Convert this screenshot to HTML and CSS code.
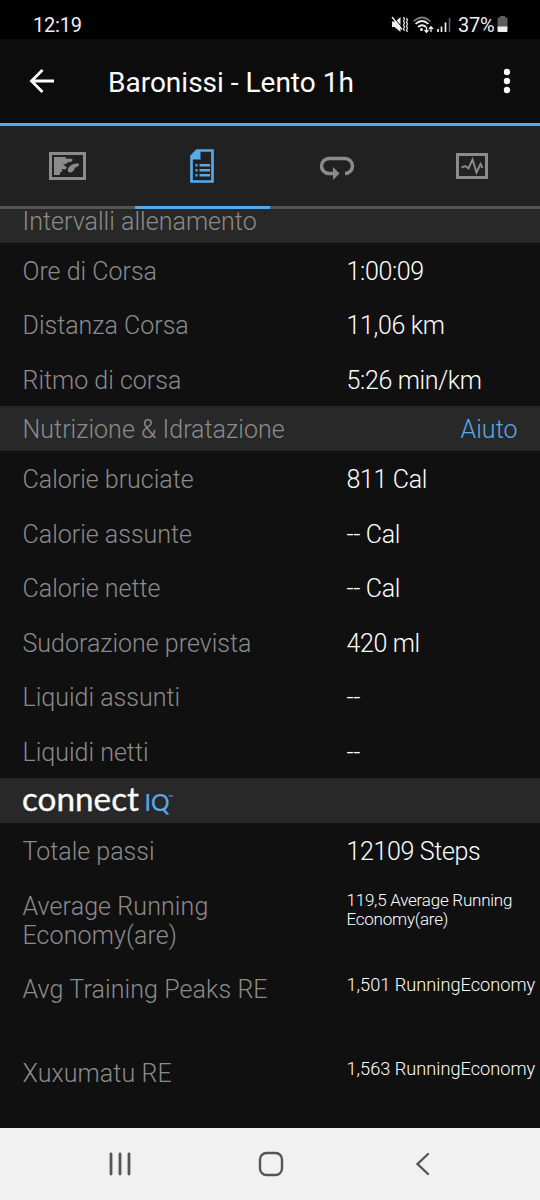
FILE: index.html
```html
<!DOCTYPE html>
<html lang="it">
<head>
<meta charset="utf-8">
<title>Baronissi - Lento 1h</title>
<link rel="stylesheet" href="styles.css">
</head>
<body>
<div class="status">
  <span class="clock">12:19</span>
  <svg class="status-icons" width="64" height="24" viewBox="0 0 64 24">
    <path d="M3 8.500h3.500l5-4.500v15l-6-5H3z" fill="#eee"/>
    <path d="M3.500 3l11 13" stroke="#000" stroke-width="1"/>
    <path d="M3 4l10 12.500" stroke="#eee" stroke-width="1.300"/>
    <path d="M14.500 4l1 2-1 2 1 2-1 2 1 2-1 2 1 2M17.500 5l1 2-1 2 1 2-1 2 1 2-1 2 1 2" fill="none" stroke="#ddd" stroke-width="1.300"/>
    <path d="M24.500 8.500q8.500-8 17 0" fill="none" stroke="#777" stroke-width="1.700"/>
    <path d="M26.500 11q6.500-6 13 0M29 14q4-3.500 8 0" fill="none" stroke="#eee" stroke-width="1.700"/>
    <circle cx="32.500" cy="16.500" r="1.500" fill="#eee"/>
    <path d="M37.500 14v5M35.500 17l2 2.300 2-2.300M42 19v-5M40 16l2-2.300 2 2.300" fill="none" stroke="#eee" stroke-width="1.300"/>
    <path d="M49 16v3M52.500 13.500V19M56.500 9.500V19" stroke="#eee" stroke-width="1.700"/>
    <path d="M60.500 5v14" stroke="#666" stroke-width="1.500"/>
  </svg>
  <span class="percent">37%</span>
  <svg class="battery" width="11" height="18" viewBox="0 0 11 18">
    <path d="M3 1h5v1.500h2.500V12H.5V2.500H3z" fill="#5c5c5c"/>
    <path d="M.5 11.500h10V16q0 1-1 1h-8q-1 0-1-1z" fill="#eee"/>
  </svg>
</div>
<header class="appbar">
  <svg class="back" width="26" height="26" viewBox="0 0 26 26"><path d="M25 13H3M13.500 2L2.500 13l11 11" fill="none" stroke="#fff" stroke-width="2.800"/></svg>
  <h1 class="title">Baronissi - Lento 1h</h1>
  <svg class="more" width="8" height="26" viewBox="0 0 8 26" fill="#fff"><circle cx="4" cy="4" r="3.200"/><circle cx="4" cy="13" r="3.200"/><circle cx="4" cy="22" r="3.200"/></svg>
</header>
<nav class="tabs">
  <div class="tab">
    <svg width="38" height="30" viewBox="0 0 38 30"><rect x="2.500" y="2.500" width="34" height="25" fill="none" stroke="#8b8b8b" stroke-width="3"/><path d="M6 6h12l-.5 2 3-.5 4 .5-.5 2.500-4.500 1-1.500 1.500-3 .5 2 1.500 2 1.500-1.500 2-4-.5 1 2-2.500 1.500v2.500H6zM31 12.500q.5 3-4 4-1.500 5-5 5-3-.5-2-4 3-5.500 11-5z" fill="#8b8b8b"/></svg>
  </div>
  <div class="tab tab-active">
    <svg width="26" height="36" viewBox="0 0 26 36"><path d="M8 2.500h15.500v31h-21V8z" fill="none" stroke="#58a9e7" stroke-width="2.700"/><path d="M8 2h3.500v9.500H2V8zM6.500 16h2v2.500h-2zM6.500 21h2v2.500h-2zM6.500 26h2v2.500h-2zM10.500 16h10.500v2.500H10.500zM10.500 21h10.500v2.500H10.500zM10.500 26h10.500v2.500H10.500z" fill="#58a9e7"/></svg>
  </div>
  <div class="tab">
    <svg class="laps" width="36" height="26" viewBox="0 0 36 26"><path d="M14 18.500h-4a7.500 7.500 0 0 1 0-15h16a7.500 7.500 0 0 1 0 15" fill="none" stroke="#8b8b8b" stroke-width="3.500"/><path d="M14 12v13l6.500-6.500z" fill="#8b8b8b"/></svg>
  </div>
  <div class="tab">
    <svg width="34" height="28" viewBox="0 0 34 28"><rect x="2.500" y="2.500" width="29" height="23" fill="none" stroke="#8b8b8b" stroke-width="3"/><path d="M6.500 15.500l4-1.500 3 2.500L17.500 7.500l4 13 4-8.500 2 4" fill="none" stroke="#8b8b8b" stroke-width="1.900"/></svg>
  </div>
</nav>
<main class="list">
  <div class="section section-cut"><span>Intervalli allenamento</span></div>
  <div class="row"><span class="label">Ore di Corsa</span><span class="value">1:00:09</span></div>
  <div class="row"><span class="label">Distanza Corsa</span><span class="value">11,06 km</span></div>
  <div class="row"><span class="label">Ritmo di corsa</span><span class="value">5:26 min/km</span></div>
  <div class="section"><span>Nutrizione &amp; Idratazione</span><a class="help">Aiuto</a></div>
  <div class="row"><span class="label">Calorie bruciate</span><span class="value">811 Cal</span></div>
  <div class="row"><span class="label">Calorie assunte</span><span class="value">-- Cal</span></div>
  <div class="row"><span class="label">Calorie nette</span><span class="value">-- Cal</span></div>
  <div class="row"><span class="label">Sudorazione prevista</span><span class="value">420 ml</span></div>
  <div class="row"><span class="label">Liquidi assunti</span><span class="value">--</span></div>
  <div class="row"><span class="label">Liquidi netti</span><span class="value">--</span></div>
  <div class="section">
    <svg class="logo" width="156" height="30" viewBox="0 0 156 30">
      <text class="logo-word" x="-1" y="23.500" textLength="117" lengthAdjust="spacingAndGlyphs">connect</text>
      <text class="logo-iq" x="121.500" y="23.500" textLength="25" lengthAdjust="spacingAndGlyphs">IQ</text>
      <text class="logo-tm" x="145" y="13">™</text>
    </svg>
  </div>
  <div class="row"><span class="label">Totale passi</span><span class="value">12109 Steps</span></div>
  <div class="row row-tall"><span class="label">Average Running Economy(are)</span><span class="value value-small">119,5 Average Running Economy(are)</span></div>
  <div class="row row-tall"><span class="label">Avg Training Peaks RE</span><span class="value value-medium">1,501 RunningEconomy</span></div>
  <div class="row row-tall"><span class="label">Xuxumatu RE</span><span class="value value-medium">1,563 RunningEconomy</span></div>
</main>
<footer class="navbar">
  <svg width="24" height="24" viewBox="0 0 24 24"><path d="M2 2v20M11 2v20M20 2v20" stroke="#555" stroke-width="2.800" stroke-linecap="round"/></svg>
  <svg class="home" width="26" height="26" viewBox="0 0 26 26"><rect x="2" y="2" width="22" height="22" rx="6.500" fill="none" stroke="#555" stroke-width="2.400"/></svg>
  <svg width="16" height="24" viewBox="0 0 16 24"><path d="M13 2L2.500 12 13 22" fill="none" stroke="#555" stroke-width="2.400" stroke-linecap="round"/></svg>
</footer>
</body>
</html>
```

FILE: styles.css
```css
* { box-sizing: border-box; }
body {
  margin: 0;
  width: 540px;
  height: 1200px;
  overflow: hidden;
  display: flex;
  flex-direction: column;
  background: #101010;
  color: #fff;
  font-family: Roboto, "Noto Sans", sans-serif;
}
svg { display: block; flex: none; }
.status {
  height: 39px;
  flex: none;
  display: flex;
  align-items: center;
  padding: 11px 32px 0 33px;
  background: #000;
  color: #eee;
  font-size: 20px;
  line-height: 28px;
}
.clock { flex: 1; letter-spacing: -0.200px; }
.status-icons { margin-right: 5px; }
.percent { width: 39px; white-space: nowrap; letter-spacing: -0.300px; }
.battery { margin-top: -2px; }
.appbar {
  height: 87px;
  flex: none;
  display: flex;
  align-items: center;
  padding: 0 29px;
  background: #0c0c0c;
  border-bottom: 3px solid #58a9e7;
}
.title {
  flex: 1;
  margin: 3px 0 0 53px;
  font-size: 28px;
  font-weight: 400;
  line-height: 36px;
}
.tabs {
  height: 83px;
  flex: none;
  display: grid;
  grid-template-columns: repeat(4, 1fr);
  background: #212121;
}
.tab {
  display: flex;
  align-items: center;
  justify-content: center;
  padding-right: 1px;
  border-bottom: 3px solid #535353;
}
.tab-active { border-color: #58a9e7; }
.laps { margin-top: 4px; }
.list {
  flex: none;
  height: 919px;
  font-size: 25px;
  font-weight: 300;
  line-height: 29.3px;
}
.section {
  height: 45px;
  display: flex;
  align-items: center;
  justify-content: space-between;
  padding: 2px 22.500px 0;
  background: #282828;
  color: #8b8b8b;
  letter-spacing: 0.030px;
}
.section-cut {
  height: 33.500px;
  padding-top: 0;
  padding-bottom: 9px;
}
.help { color: #58a9e7; }
.row {
  height: 54.500px;
  display: grid;
  grid-template-columns: 324px 1fr;
  padding: 14px 0 0 22.500px;
  color: #8b8b8b;
}
.row-tall { height: 83.700px; }
.label { padding-right: 70px; }
.row-tall .label { letter-spacing: 0.100px; }
.value { color: #fff; letter-spacing: -0.350px; }
.value-small { font-size: 17px; line-height: 19.500px; padding-right: 20px; margin-top: -1px; letter-spacing: -0.230px; }
.value-medium { font-size: 18.200px; line-height: 20px; white-space: nowrap; letter-spacing: 0; }
.logo { overflow: visible; }
.logo-word { font: 400 32px Lato, sans-serif; letter-spacing: 0; fill: #fff; stroke: #fff; stroke-width: 0.300px; }
.logo-iq { font: 400 22.500px Lato, sans-serif; letter-spacing: 0; fill: #58a9e7; stroke: #58a9e7; stroke-width: 0.200px; }
.logo-tm { font: 400 7px Lato, sans-serif; fill: #58a9e7; }
.navbar {
  height: 72px;
  flex: none;
  display: flex;
  align-items: center;
  justify-content: space-between;
  padding: 0 109px 0 109px;
  background: #f1f1f1;
}
.home { margin-right: 7px; }
```
